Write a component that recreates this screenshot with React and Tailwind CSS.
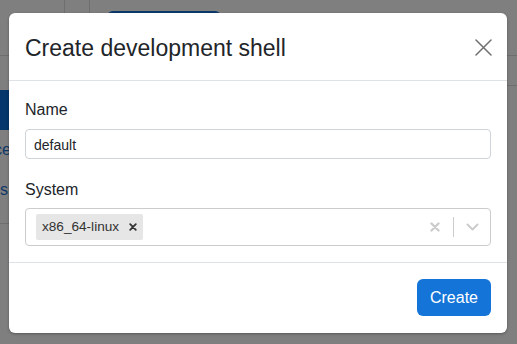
import React from 'react'

function CloseIcon() {
  return (
    <svg width="17" height="17" viewBox="0 0 17 17" fill="none" stroke="#707070" strokeWidth="1.5" strokeLinecap="round">
      <path d="M1 1L16 16M16 1L1 16" />
    </svg>
  )
}

function SmallX({ size = 10, color = '#cccccc', width = 2.4 }) {
  return (
    <svg width={size} height={size} viewBox="0 0 10 10" fill="none" stroke={color} strokeWidth={width} strokeLinecap="round">
      <path d="M1.5 1.5L8.5 8.5M8.5 1.5L1.5 8.5" />
    </svg>
  )
}

function Chevron() {
  return (
    <svg width="13" height="8" viewBox="0 0 13 8" fill="none" stroke="#cccccc" strokeWidth="2" strokeLinecap="round" strokeLinejoin="round">
      <path d="M1.5 1.5L6.5 6.5L11.5 1.5" />
    </svg>
  )
}

export default function App() {
  return (
    <div className="relative w-[517px] h-[344px] overflow-hidden bg-white" style={{ fontFamily: '"Liberation Sans", Arial, sans-serif' }}>
      {/* page behind the dialog */}
      <div className="flex flex-col h-full">
        <div className="flex h-[56px] border-b border-[#dcdcdc]">
          <div className="w-[65px] border-r border-[#dcdcdc]" />
          <div className="w-[25px] border-r border-[#dcdcdc]" />
          <div className="pl-[17px] pt-[11px]">
            <div className="w-[114px] h-[34px] rounded-md bg-[#1474d8]" />
          </div>
        </div>
        <div className="flex flex-1">
          <div className="w-[120px] flex flex-col pt-[34px] text-[16px] text-[#1a6fd1]">
            <div className="h-[40px] bg-[#0a6ed9]" />
            <div className="w-[11px] h-[40px] flex items-center justify-end overflow-hidden whitespace-nowrap">Workspace</div>
            <div className="w-[8px] h-[40px] flex items-center justify-end overflow-hidden whitespace-nowrap">Settings</div>
            <div className="h-[14px] border-b border-[#dcdcdc]" />
          </div>
          <div className="flex-1 flex flex-col pt-[29px]">
            <div className="border-b border-[#dcdcdc]" />
          </div>
        </div>
      </div>

      <div className="absolute inset-0 bg-black/50" />

      {/* dialog */}
      <div className="absolute left-[9px] top-[13px] w-[498px] h-[320px] bg-white rounded-[6px] shadow-[0_1px_3px_rgba(0,0,0,0.3)] flex flex-col text-[#212529]">
        <div className="h-[68px] flex items-center justify-between pl-[16px] pr-[15px] pt-[2px] border-b border-[#dee2e6]">
          <h1 className="text-[23px] leading-[36px]">Create development shell</h1>
          <button className="w-[17px] h-[17px] flex items-center justify-center">
            <CloseIcon />
          </button>
        </div>

        <div className="flex flex-col px-[16px] pt-[17px] pb-[16px] border-b border-[#dee2e6]">
          <label className="text-[16px] leading-[24px]">Name</label>
          <div className="mt-[7px] h-[30px] border border-[#ced4da] rounded-[4px] flex items-center px-[8px] pt-[2px] text-[14px] text-[#212529]">
            default
          </div>
          <label className="mt-[19px] text-[16px] leading-[24px]">System</label>
          <div className="mt-[6px] h-[38px] border border-[#cccccc] rounded-[4px] flex items-center pl-[10px]">
            <div className="flex-1 flex items-center">
              <div className="flex items-center h-[26px] bg-[#e6e6e6] rounded-[2px]">
                <span className="pl-[6px] pr-[3px] text-[13.6px] text-[#333333]">x86_64-linux</span>
                <span className="w-[21px] h-full flex items-center justify-center">
                  <SmallX size={8} color="#333333" width={2.2} />
                </span>
              </div>
            </div>
            <div className="flex items-center h-full">
              <div className="w-[36px] h-full flex items-center justify-center">
                <SmallX size={10} color="#cccccc" width={2.4} />
              </div>
              <div className="w-px h-[20px] bg-[#cccccc]" />
              <div className="w-[36px] h-full flex items-center justify-center">
                <Chevron />
              </div>
            </div>
          </div>
        </div>

        <div className="flex-1 flex items-start justify-end px-[16px] pt-[16px]">
          <button className="w-[74px] h-[37px] rounded-[6px] bg-[#1474d8] text-white text-[16px]">Create</button>
        </div>
      </div>
    </div>
  )
}
